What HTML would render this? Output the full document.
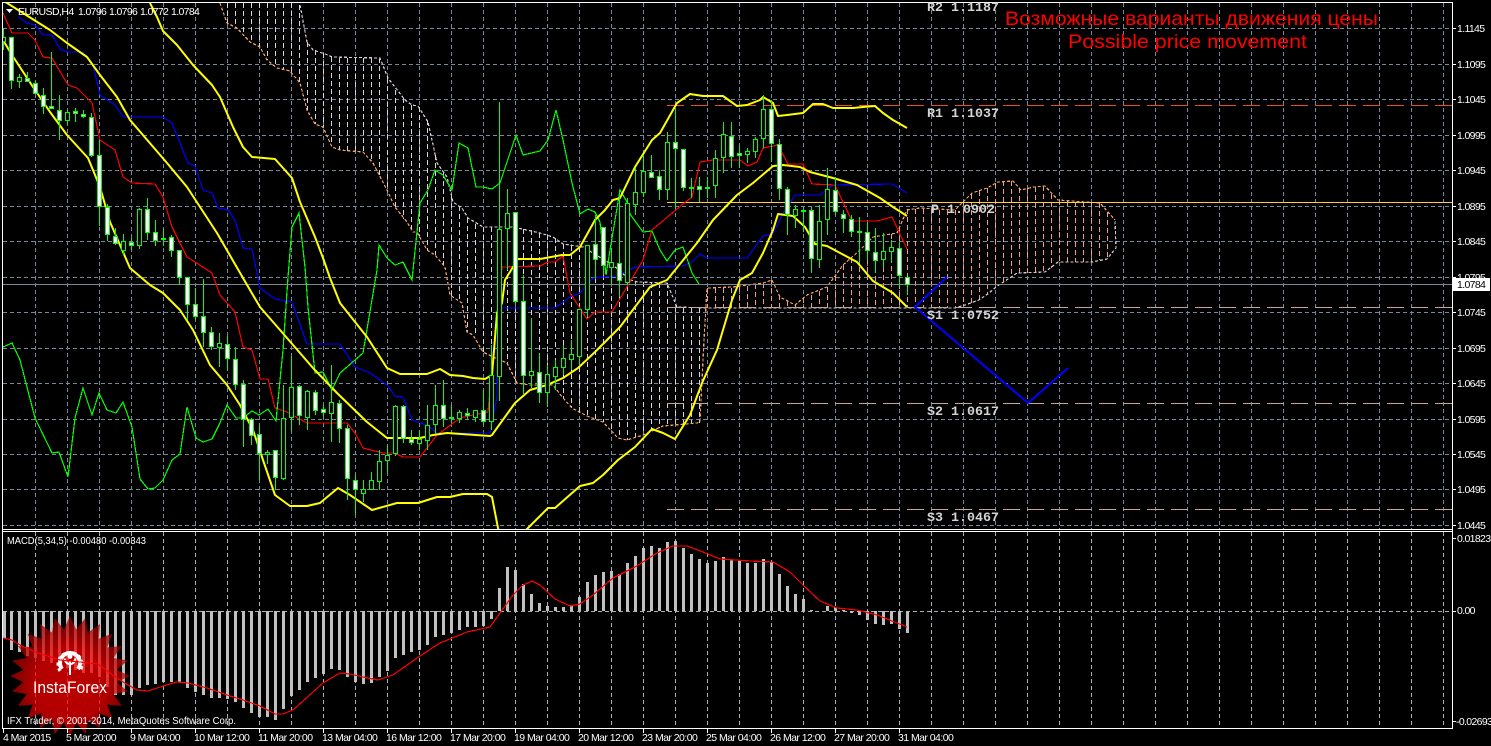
<!DOCTYPE html>
<html><head><meta charset="utf-8"><title>EURUSD,H4</title>
<style>html,body{margin:0;padding:0;background:#000;overflow:hidden}svg{display:block}text{font-family:"Liberation Sans",sans-serif;fill:#fff}</style></head>
<body>
<svg width="1491" height="746" viewBox="0 0 1491 746" xmlns="http://www.w3.org/2000/svg">
<defs>
<clipPath id="m"><rect x="3" y="3" width="1449" height="526"/></clipPath>
<clipPath id="c"><rect x="3" y="532" width="1449" height="196"/></clipPath>
<radialGradient id="g" gradientUnits="userSpaceOnUse" cx="0" cy="8" r="66"><stop offset="0" stop-color="#ff0000"/><stop offset=".55" stop-color="#f00000"/><stop offset="1" stop-color="#8c0000"/></radialGradient>
</defs>
<rect width="1491" height="746" fill="#000"/>
<!-- grid -->
<g stroke="#778899" stroke-width="1" fill="none" stroke-dasharray="4 3" shape-rendering="crispEdges">
<path d="M3 28.5H1452M3 64.5H1452M3 99.5H1452M3 135.5H1452M3 170.5H1452M3 206.5H1452M3 241.5H1452M3 277.5H1452M3 312.5H1452M3 348.5H1452M3 383.5H1452M3 419.5H1452M3 454.5H1452M3 489.5H1452M3 525.5H1452"/>
<path d="M35.5 3V529M67.5 3V529M99.5 3V529M131.5 3V529M163.5 3V529M195.5 3V529M227.5 3V529M259.5 3V529M291.5 3V529M323.5 3V529M355.5 3V529M387.5 3V529M419.5 3V529M451.5 3V529M483.5 3V529M515.5 3V529M547.5 3V529M579.5 3V529M611.5 3V529M643.5 3V529M675.5 3V529M707.5 3V529M739.5 3V529M771.5 3V529M803.5 3V529M835.5 3V529M867.5 3V529M899.5 3V529M931.5 3V529M963.5 3V529M995.5 3V529M1027.5 3V529M1059.5 3V529M1091.5 3V529M1123.5 3V529M1155.5 3V529M1187.5 3V529M1219.5 3V529M1251.5 3V529M1283.5 3V529M1315.5 3V529M1347.5 3V529M1379.5 3V529M1411.5 3V529M1443.5 3V529"/>
<path stroke="#a8b0b8" d="M35.5 532V728M67.5 532V728M99.5 532V728M131.5 532V728M163.5 532V728M195.5 532V728M227.5 532V728M259.5 532V728M291.5 532V728M323.5 532V728M355.5 532V728M387.5 532V728M419.5 532V728M451.5 532V728M483.5 532V728M515.5 532V728M547.5 532V728M579.5 532V728M611.5 532V728M643.5 532V728M675.5 532V728M707.5 532V728M739.5 532V728M771.5 532V728M803.5 532V728M835.5 532V728M867.5 532V728M899.5 532V728M931.5 532V728M963.5 532V728M995.5 532V728M1027.5 532V728M1059.5 532V728M1091.5 532V728M1123.5 532V728M1155.5 532V728M1187.5 532V728M1219.5 532V728M1251.5 532V728M1283.5 532V728M1315.5 532V728M1347.5 532V728M1379.5 532V728M1411.5 532V728M1443.5 532V728"/>
<path stroke="#a8b0b8" d="M3 611.5H1452"/>
</g>
<g clip-path="url(#m)" fill="none">
<!-- cloud hatching -->
<g stroke="#dcd2dc" stroke-dasharray="5 3" shape-rendering="crispEdges">
<path d="M227.5 3V23M235.5 3V27M243.5 3V36M251.5 3V42M259.5 3V47M267.5 3V60M275.5 3V66M283.5 3V70M291.5 3V72M299.5 5V82M307.5 42V110M315.5 50V124M323.5 53V127M331.5 57V146M339.5 58V150M347.5 58V151M355.5 58V152M363.5 58V152M371.5 58V161M379.5 58V176M387.5 78V190M395.5 90V207M403.5 98V219M411.5 105V230M419.5 107V236M427.5 120V250M435.5 155V255M443.5 173V265M451.5 195V296M459.5 206V301M467.5 218V332M475.5 224V336M483.5 227V352M491.5 227V356M499.5 226V361M507.5 226V363M515.5 227V381M523.5 229V384M531.5 230V385M539.5 233V385M547.5 235V385M555.5 238V385M563.5 244V398M571.5 246V408M579.5 247V414M587.5 250V416M595.5 254V421M603.5 259V422M611.5 264V429M619.5 270V438M627.5 278V440M635.5 281V437M643.5 282V435M651.5 283V431M659.5 283V428M667.5 283V426M675.5 307V424M683.5 308V424M691.5 308V424M699.5 308V423"/>
</g>
<g stroke="#f4a460" stroke-dasharray="5 3" shape-rendering="crispEdges">
<path d="M707.5 288V308M715.5 288V308M723.5 288V308M731.5 288V308M739.5 287V308M747.5 286V308M755.5 284V308M763.5 283V308M771.5 280V308M779.5 295V308M787.5 301V308M795.5 305V308M803.5 298V308M811.5 295V308M819.5 291V308M827.5 287V308M835.5 276V308M843.5 265V308M851.5 258V308M859.5 251V308M867.5 243V308M875.5 236V308M883.5 235V308M891.5 234V308M899.5 228V308M907.5 209V308M915.5 209V308M923.5 209V308M931.5 209V308M939.5 210V308M947.5 210V308M955.5 210V308M963.5 201V306M971.5 194V303M979.5 191V299M987.5 188V294M995.5 183V288M1003.5 181V283M1011.5 181V277M1019.5 188V273M1027.5 188V273M1035.5 187V273M1043.5 186V273M1051.5 194V268M1059.5 200V262M1067.5 201V262M1075.5 202V262M1083.5 202V262M1091.5 202V262M1099.5 203V260M1107.5 212V259"/>
</g>
<!-- cloud edges -->
<path stroke="#f4a460" stroke-width="1.200" stroke-dasharray="3 2" shape-rendering="crispEdges" d="M220 3L227 23L237 28L250 42L260 47L267 60L277 68L290 71L300 83L307 110L315 124L323 127L332 147L340 150L363 152L373 163L387 190L395 207L407 222L413 232L417 232L427 250L435 255L445 267L450 295L462 303L467 332L473 335L483 352L493 357L507 363L517 383L530 385L553 385L563 398L572 408L587 416L603 422L618 438L627 440L643 435L663 426L697 423L700 422L704 340L707 288L733 287L763 283L772 280L780 297L795 305L807 295L827 287L843 265L860 250L873 237L897 233L907 210L920 208L955 210L972 193L987 188L998 182L1013 181L1021 190L1034 187L1045 186L1058 200L1085 202L1100 203L1115 220"/>
<path stroke="#d8c8d8" stroke-width="1.200" stroke-dasharray="3 2" shape-rendering="crispEdges" d="M300 5L307 42L313 50L328 55L332 57L380 58L388 78L405 100L412 105L418 106L428 122L437 163L447 177L453 202L462 208L468 218L483 227L513 227L540 233L553 237L563 244L583 247L593 253L613 265L630 280L638 282L667 283L677 307L707 308L955 308L965 305L979 300L989 293L996 287L1017 273L1045 272L1058 262L1092 262L1107 259L1116 248L1115 220"/>
<!-- pivots -->
<g shape-rendering="crispEdges">
<path stroke="#e8501a" stroke-dasharray="17 7" d="M667 105.500H1452"/>
<path stroke="#ffcf40" d="M667 202.500H1452"/>
<path stroke="#c8a498" stroke-dasharray="17 7" d="M667 307.500H1452M667 403.500H1452M667 509.500H1452"/>
<path stroke="#778899" d="M3 284.500H1452"/>
</g>
<!-- indicator lines -->
<path stroke="#0000ff" stroke-width="1.200" shape-rendering="crispEdges" d="M18 17L27 23L35 25L43 35L52 35L60 49L67 52L83 52L93 65L100 95L115 105L123 117L163 117L172 123L188 163L195 166L203 190L212 193L218 208L228 210L235 220L243 248L252 249L258 278L260 288L275 299L292 302L307 344L340 344L355 367L370 373L387 385L395 396L403 397L412 420L427 425L437 433L490 433L497 397L498 320L502 308L555 308L570 297L580 293L593 278L617 276L635 267L683 266L692 262L700 254L707 258L747 258L763 236L773 234L782 215L795 195L820 195L833 185L892 184L907 193"/>
<path stroke="#ff0000" stroke-width="1.200" shape-rendering="crispEdges" d="M3 13L12 33L28 33L35 40L43 57L52 58L68 85L77 88L92 103L100 140L115 150L123 177L132 183L155 184L163 197L172 227L187 257L195 262L212 273L220 295L235 312L243 347L252 350L260 379L268 379L275 408L287 412L307 423L347 423L355 433L363 448L383 453L395 453L403 457L420 457L437 435L460 418L473 415L488 412L497 313L502 267L540 266L548 262L555 262L563 256L570 293L587 319L595 312L612 312L643 260L652 230L683 204L692 197L700 162L713 160L740 160L748 166L757 162L763 148L778 145L788 164L803 164L812 184L835 185L852 221L877 221L892 217L907 249"/>
<path stroke="#00ff00" stroke-width="1.200" shape-rendering="crispEdges" d="M3 347L12 343L20 360L35 418L52 453L59 452L68 477L75 418L83 388L92 415L99 393L107 410L116 413L123 402L132 427L140 479L148 489L155 488L163 480L172 460L180 454L187 407L196 438L203 442L212 439L220 423L227 405L236 418L243 418L252 411L259 415L268 409L276 421L283 350L288 277L292 227L299 213L305 267L308 307L315 373L323 372L332 390L340 373L355 360L363 353L377 270L379 245L387 258L395 265L403 262L412 280L420 203L428 190L435 170L443 175L452 190L459 143L468 148L476 187L483 187L492 189L500 183L516 135L523 155L540 151L548 140L556 110L563 140L572 183L580 214L588 209L595 212L600 222L606 275L613 232L620 190L627 202L630 214L643 232L652 231L660 250L667 261L675 250L683 247L692 273L699 284"/>
<g stroke="#ffff00" stroke-width="2" stroke-linejoin="round">
<path d="M150 3L157 17L163 31L177 45L193 65L212 85L220 97L233 127L243 147L252 157L275 159L292 178L300 202L315 237L323 258L330 278L340 303L367 337L387 368L400 374L427 374L440 369L450 375L463 376L473 378L485 379L492 375L497 313L502 303L505 280L518 259L540 259L562 255L570 255L580 247L595 220L605 210L613 200L620 198L635 167L652 140L660 133L677 103L690 94L703 96L723 96L737 106L747 105L760 100L763 97L773 103L778 116L787 115L803 113L813 104L823 104L833 108L853 108L863 107L875 106L883 113L893 120L907 128"/>
<path d="M3 1L7 3L50 30L67 43L87 57L100 75L117 97L130 120L167 163L187 187L217 233L243 278L260 307L287 338L313 368L337 393L367 422L387 438L403 438L420 438L433 435L447 433L490 436L492 435L515 403L530 390L547 385L563 378L578 368L595 352L607 340L620 327L650 287L667 280L697 243L713 220L737 195L753 183L773 166L783 165L800 167L810 172L833 178L857 185L880 198L893 207L907 216"/>
<path d="M3 40L12 55L33 87L50 112L67 135L88 158L100 187L110 222L130 268L150 285L163 293L180 310L193 330L210 365L227 385L240 405L253 430L263 460L275 495L290 506L307 506L320 503L338 488L350 495L372 510L397 503L418 503L437 497L450 497L463 494L487 494L492 497L498 528L500 535"/>
<path d="M524 532L528 528L548 508L555 508L580 486L593 483L603 475L618 460L635 447L652 429L663 433L675 439L690 415L702 383L717 350L732 300L740 280L752 273L763 253L773 230L778 214L793 216L805 227L815 244L827 246L857 262L873 281L893 293L907 307"/>
</g>
<!-- candles -->
<g shape-rendering="crispEdges" stroke="#00ff00">
<path d="M3.500 29V50M11.500 37V89M19.500 74V88M27.500 72V82M35.500 80V94M43.500 88V114M51.500 52V108M59.500 95V140M67.500 110V125M75.500 108V122M83.500 110V118M91.500 113V157M99.500 140V226M107.500 204V241M115.500 228V245M123.500 234V255M131.500 238V250M139.500 208V249M147.500 198V240M155.500 220V246M163.500 229V246M171.500 235V257M179.500 250V285M187.500 277V320M195.500 288V320M203.500 279V347M211.500 327V350M219.500 333V367M227.500 336V370M235.500 347V390M243.500 380V447M251.500 418V445M259.500 425V480M267.500 450V464M275.500 450V490M283.500 385V480M291.500 356V431M299.500 385V425M307.500 390V430M315.500 390V415M323.500 405V417M331.500 365V442M339.500 400V443M347.500 425V500M355.500 475V515M363.500 480V502M371.500 472V490M379.500 450V490M387.500 445V473M395.500 405V456M403.500 405V443M411.500 430V445M419.500 430V450M427.500 405V450M435.500 385V434M443.500 380V427M451.500 405V423M459.500 410V423M467.500 408V420M475.500 410V422M483.500 390V425M491.500 345V430M499.500 102V401M507.500 189V270M515.500 212V305M523.500 275V395M531.500 318V388M539.500 353V403M547.500 365V407M555.500 360V390M563.500 345V375M571.500 340V370M579.500 309V365M587.500 245V317M595.500 215V278M603.500 227V275M611.500 248V285M619.500 190V297M627.500 198V285M635.500 168V215M643.500 155V197M651.500 155V178M659.500 170V200M667.500 132V200M675.500 110V209M683.500 149V191M691.500 178V198M699.500 177V202M707.500 177V198M715.500 150V198M723.500 122V173M731.500 122V168M739.500 145V168M747.500 148V163M755.500 137V158M763.500 95V148M771.500 100V162M779.500 139V200M787.500 187V235M795.500 205V228M803.500 207V232M811.500 207V273M819.500 205V268M827.500 168V235M835.500 177V215M843.500 210V233M851.500 215V237M859.500 217V263M867.500 222V260M875.500 228V273M883.500 233V268M891.500 240V263M899.500 242V287M907.500 277V295"/>
<path fill="#000" d="M1.500 37.500h4v4h-4zM17.500 77.500h4v4h-4zM65.500 112.500h4v8h-4zM121.500 241.500h4v9h-4zM137.500 209.500h4v36h-4zM217.500 343.500h4v4h-4zM265.500 452.500h4v2h-4zM281.500 418.500h4v60h-4zM289.500 387.500h4v30h-4zM305.500 391.500h4v26h-4zM329.500 402.500h4v11h-4zM361.500 489.500h4v4h-4zM369.500 480.500h4v9h-4zM377.500 461.500h4v20h-4zM385.500 455.500h4v5h-4zM393.500 406.500h4v47h-4zM417.500 439.500h4v4h-4zM425.500 425.500h4v15h-4zM433.500 405.500h4v19h-4zM457.500 412.500h4v6h-4zM473.500 410.500h4v7h-4zM489.500 375.500h4v46h-4zM497.500 229.500h4v147h-4zM505.500 213.500h4v15h-4zM529.500 371.500h4v4h-4zM545.500 374.500h4v18h-4zM553.500 367.500h4v9h-4zM561.500 358.500h4v9h-4zM569.500 354.500h4v5h-4zM577.500 309.500h4v47h-4zM585.500 245.500h4v64h-4zM609.500 262.500h4v5h-4zM625.500 203.500h4v79h-4zM633.500 192.500h4v12h-4zM641.500 171.500h4v21h-4zM665.500 142.500h4v47h-4zM705.500 187.500h4v1h-4zM713.500 158.500h4v27h-4zM721.500 134.500h4v23h-4zM745.500 151.500h4v3h-4zM753.500 139.500h4v12h-4zM761.500 109.500h4v29h-4zM793.500 209.500h4v6h-4zM817.500 221.500h4v38h-4zM825.500 189.500h4v30h-4zM881.500 251.500h4v8h-4zM889.500 247.500h4v4h-4z"/>
<path fill="#fff" d="M9.500 37.500h4v43h-4zM25.500 78.500h4v3h-4zM33.500 83.500h4v10h-4zM41.500 95.500h4v11h-4zM49.500 106.500h4v2h-4zM57.500 110.500h4v10h-4zM73.500 111.500h4v2h-4zM81.500 114.500h4v2h-4zM89.500 117.500h4v38h-4zM97.500 155.500h4v51h-4zM105.500 207.500h4v27h-4zM113.500 236.500h4v7h-4zM129.500 242.500h4v3h-4zM145.500 209.500h4v23h-4zM153.500 232.500h4v8h-4zM161.500 238.500h4v1h-4zM169.500 237.500h4v13h-4zM177.500 250.500h4v27h-4zM185.500 277.500h4v27h-4zM193.500 304.500h4v12h-4zM201.500 316.500h4v16h-4zM209.500 332.500h4v14h-4zM225.500 344.500h4v14h-4zM233.500 359.500h4v25h-4zM241.500 384.500h4v35h-4zM249.500 419.500h4v16h-4zM257.500 434.500h4v19h-4zM273.500 450.500h4v27h-4zM297.500 386.500h4v29h-4zM313.500 392.500h4v18h-4zM321.500 409.500h4v3h-4zM337.500 403.500h4v25h-4zM345.500 428.500h4v50h-4zM353.500 480.500h4v9h-4zM401.500 406.500h4v32h-4zM409.500 439.500h4v3h-4zM441.500 405.500h4v13h-4zM449.500 417.500h4v1h-4zM465.500 413.500h4v2h-4zM481.500 410.500h4v11h-4zM513.500 212.500h4v89h-4zM521.500 301.500h4v74h-4zM537.500 372.500h4v20h-4zM593.500 244.500h4v15h-4zM601.500 227.500h4v38h-4zM617.500 263.500h4v17h-4zM649.500 172.500h4v5h-4zM657.500 176.500h4v13h-4zM673.500 142.500h4v6h-4zM681.500 149.500h4v38h-4zM689.500 187.500h4v1h-4zM697.500 186.500h4v3h-4zM729.500 136.500h4v20h-4zM737.500 153.500h4v2h-4zM769.500 109.500h4v34h-4zM777.500 144.500h4v44h-4zM785.500 189.500h4v25h-4zM801.500 210.500h4v1h-4zM809.500 210.500h4v48h-4zM833.500 190.500h4v21h-4zM841.500 214.500h4v4h-4zM849.500 219.500h4v12h-4zM857.500 231.500h4v1h-4zM865.500 232.500h4v18h-4zM873.500 252.500h4v8h-4zM897.500 248.500h4v27h-4zM905.500 277.500h4v7h-4z"/>
</g>
<!-- forecast -->
<path stroke="#0000ff" stroke-width="2" d="M947 277L915 307L1028 403L1068 368"/>
</g>
<!-- MACD histogram -->
<g stroke="#c0c0c0" stroke-width="3" shape-rendering="crispEdges" clip-path="url(#c)">
<path d="M4.500 611V638M11.500 611V650M19.500 611V652M27.500 611V656M35.500 611V658M43.500 611V661M51.500 611V663M59.500 611V667M67.500 611V668M75.500 611V670M83.500 611V673M91.500 611V673M99.500 611V677M107.500 611V687M115.500 611V695M123.500 611V695M131.500 611V695M139.500 611V688M147.500 611V685M155.500 611V684M163.500 611V682M171.500 611V682M179.500 611V682M187.500 611V688M195.500 611V692M203.500 611V695M211.500 611V698M219.500 611V698M227.500 611V699M235.500 611V702M243.500 611V708M251.500 611V713M259.500 611V717M267.500 611V717M275.500 611V720M283.500 611V709M291.500 611V696M299.500 611V690M307.500 611V682M315.500 611V678M323.500 611V674M331.500 611V669M339.500 611V670M347.500 611V677M355.500 611V682M363.500 611V684M371.500 611V683M379.500 611V677M387.500 611V671M395.500 611V658M403.500 611V655M411.500 611V652M419.500 611V650M427.500 611V645M435.500 611V637M443.500 611V635M451.500 611V633M459.500 611V630M467.500 611V627M475.500 611V627M483.500 611V626M491.500 611V619"/>
<path d="M499.500 611V588M507.500 611V567M515.500 611V570M523.500 611V584M531.500 611V594M539.500 611V603M547.500 611V606M555.500 611V607M563.500 611V607M571.500 611V605M579.500 611V597M587.500 611V582M595.500 611V575M603.500 611V572M611.500 611V571M619.500 611V574M627.500 611V563M635.500 611V556M643.500 611V548M651.500 611V546M659.500 611V548M667.500 611V542M675.500 611V541M683.500 611V548M691.500 611V554M699.500 611V559M707.500 611V563M715.500 611V561M723.500 611V557M731.500 611V559M739.500 611V561M747.500 611V563M755.500 611V563M763.500 611V559M771.500 611V562M779.500 611V574M787.500 611V586M795.500 611V594M803.500 611V599M811.500 611V610M827.500 611V606M835.500 611V607M843.500 611V610M851.500 611V613M859.500 611V615M867.500 611V620M875.500 611V624M883.500 611V625M891.500 611V624M899.500 611V629M907.500 611V633"/>
</g>
<!-- InstaForex badge -->
<polygon opacity=".74" fill="url(#g)" transform="translate(70,676)" points="60,0 46.6,6.13 57.96,15.53 43.42,17.99 51.96,30 37.29,28.61 42.43,42.43 28.61,37.29 30,51.96 17.99,43.42 15.53,57.96 6.13,46.6 0,60 -6.13,46.6 -15.53,57.96 -17.99,43.42 -30,51.96 -28.61,37.29 -42.43,42.43 -37.29,28.61 -51.96,30 -43.42,17.99 -57.96,15.53 -46.6,6.13 -60,0 -46.6,-6.13 -57.96,-15.53 -43.42,-17.99 -51.96,-30 -37.29,-28.61 -42.43,-42.43 -28.61,-37.29 -30,-51.96 -17.99,-43.42 -15.53,-57.96 -6.13,-46.6 0,-60 6.13,-46.6 15.53,-57.96 17.99,-43.42 30,-51.96 28.61,-37.29 42.43,-42.43 37.29,-28.61 51.96,-30 43.42,-17.99 57.96,-15.53 46.6,-6.13"/>
<g fill="none" stroke="#fff">
<path stroke-width="4" d="M62 669A10 10 0 1 1 78 669"/>
<path stroke-width="3" stroke-dasharray="3 2.800" d="M60 671A12 12 0 1 1 80 671"/>
<circle cx="70" cy="656.500" r="2.400" fill="#fff" stroke="none"/>
<path stroke-width="2" d="M64.500 658.500Q65.500 663.500 70 664.500Q74.500 663.500 75.500 658.500M70 661V675"/>
</g>
<text x="33" y="693" font-size="16.500" textLength="74" lengthAdjust="spacingAndGlyphs">InstaForex</text>
<!-- MACD signal -->
<path clip-path="url(#c)" fill="none" stroke="#ff0000" stroke-width="1.200" shape-rendering="crispEdges" d="M3 638L12 640L20 645L35 652L60 660L80 662L98 664L110 673L123 682L137 690L148 691L163 686L177 682L188 683L207 688L227 695L243 700L260 706L275 714L283 714L293 710L323 683L340 673L350 674L363 677L378 680L393 675L420 656L440 643L467 632L490 627L500 613L513 595L523 585L532 581L540 585L555 599L570 606L580 604L593 595L613 578L635 567L657 553L673 546L687 546L703 552L720 559L750 561L773 562L790 572L803 585L820 601L837 608L857 610L877 615L907 627"/>
<!-- frame -->
<g fill="none" stroke="#fff" shape-rendering="crispEdges">
<path d="M2.500 2.500H1452.500V728.500H2.500Z"/>
<path d="M3 529.500H1452M3 531.500H1452"/>
<path d="M3.500 729V733M67.500 729V733M131.500 729V733M195.500 729V733M259.500 729V733M323.500 729V733M387.500 729V733M451.500 729V733M515.500 729V733M579.500 729V733M643.500 729V733M707.500 729V733M771.500 729V733M835.500 729V733M899.500 729V733"/>
<path d="M1453 28.500h3M1453 64.500h3M1453 99.500h3M1453 135.500h3M1453 170.500h3M1453 206.500h3M1453 241.500h3M1453 277.500h3M1453 312.500h3M1453 348.500h3M1453 383.500h3M1453 419.500h3M1453 454.500h3M1453 489.500h3M1453 525.500h3M1453 538.500h3M1453 611.500h3M1453 721.500h3"/>
</g>
<!-- right axis labels -->
<g font-size="10.500" letter-spacing="-.65">
<text x="1457" y="32">1.1145</text><text x="1457" y="68">1.1095</text><text x="1457" y="103">1.1045</text><text x="1457" y="139">1.0995</text><text x="1457" y="174">1.0945</text><text x="1457" y="210">1.0895</text><text x="1457" y="245">1.0845</text><text x="1457" y="281">1.0795</text><text x="1457" y="316">1.0745</text><text x="1457" y="352">1.0695</text><text x="1457" y="387">1.0645</text><text x="1457" y="423">1.0595</text><text x="1457" y="458">1.0545</text><text x="1457" y="493">1.0495</text><text x="1457" y="529">1.0445</text>
<text x="1457" y="542">0.01823</text><text x="1457" y="614">0.00</text><text x="1456" y="725">-0.02693</text>
</g>
<rect x="1453" y="278" width="37" height="13" fill="#fff"/>
<text x="1457" y="288" font-size="10.500" letter-spacing="-.65" style="fill:#000">1.0784</text>
<!-- time axis -->
<g font-size="10.500" letter-spacing="-.55">
<text x="3" y="741">4 Mar 2015</text><text x="66" y="741">5 Mar 20:00</text><text x="130" y="741">9 Mar 04:00</text><text x="194" y="741">10 Mar 12:00</text><text x="258" y="741">11 Mar 20:00</text><text x="322" y="741">13 Mar 04:00</text><text x="386" y="741">16 Mar 12:00</text><text x="450" y="741">17 Mar 20:00</text><text x="514" y="741">19 Mar 04:00</text><text x="578" y="741">20 Mar 12:00</text><text x="642" y="741">23 Mar 20:00</text><text x="706" y="741">25 Mar 04:00</text><text x="770" y="741">26 Mar 12:00</text><text x="834" y="741">27 Mar 20:00</text><text x="898" y="741">31 Mar 04:00</text>
</g>
<!-- chart labels -->
<polygon points="6,9 13,9 9.500,13" fill="#fff"/>
<g font-size="10.500" letter-spacing="-.55">
<text x="18" y="15">EURUSD,H4</text>
<text x="78" y="15" letter-spacing="-.65">1.0796</text><text x="109" y="15" letter-spacing="-.65">1.0796</text><text x="140" y="15" letter-spacing="-.65">1.0772</text><text x="171" y="15" letter-spacing="-.65">1.0784</text>
</g>
<text x="7" y="544" font-size="10.500" textLength="139" lengthAdjust="spacingAndGlyphs">MACD(5,34,5) -0.00480 -0.00343</text>
<text x="7" y="724" font-size="10.500" textLength="229" lengthAdjust="spacingAndGlyphs">IFX Trader, © 2001-2014, MetaQuotes Software Corp.</text>
<g font-size="13.330" font-weight="bold">
<text x="927" y="11" style="fill:#d4d4d4;font-family:'Liberation Mono',monospace">R2 1.1187</text>
<text x="927" y="117" style="fill:#d4d4d4;font-family:'Liberation Mono',monospace">R1 1.1037</text>
<text x="931" y="213" style="fill:#d4d4d4;font-family:'Liberation Mono',monospace">P 1.0902</text>
<text x="927" y="319" style="fill:#d4d4d4;font-family:'Liberation Mono',monospace">S1 1.0752</text>
<text x="927" y="415" style="fill:#d4d4d4;font-family:'Liberation Mono',monospace">S2 1.0617</text>
<text x="927" y="521" style="fill:#d4d4d4;font-family:'Liberation Mono',monospace">S3 1.0467</text>
</g>
<g font-size="19.500">
<text x="1005" y="25" textLength="373" lengthAdjust="spacingAndGlyphs" style="fill:#ff0000">Возможные варианты движения цены</text>
<text x="1068" y="48" textLength="239" lengthAdjust="spacingAndGlyphs" style="fill:#ff0000">Possible price movement</text>
</g>
</svg>
</body></html>
